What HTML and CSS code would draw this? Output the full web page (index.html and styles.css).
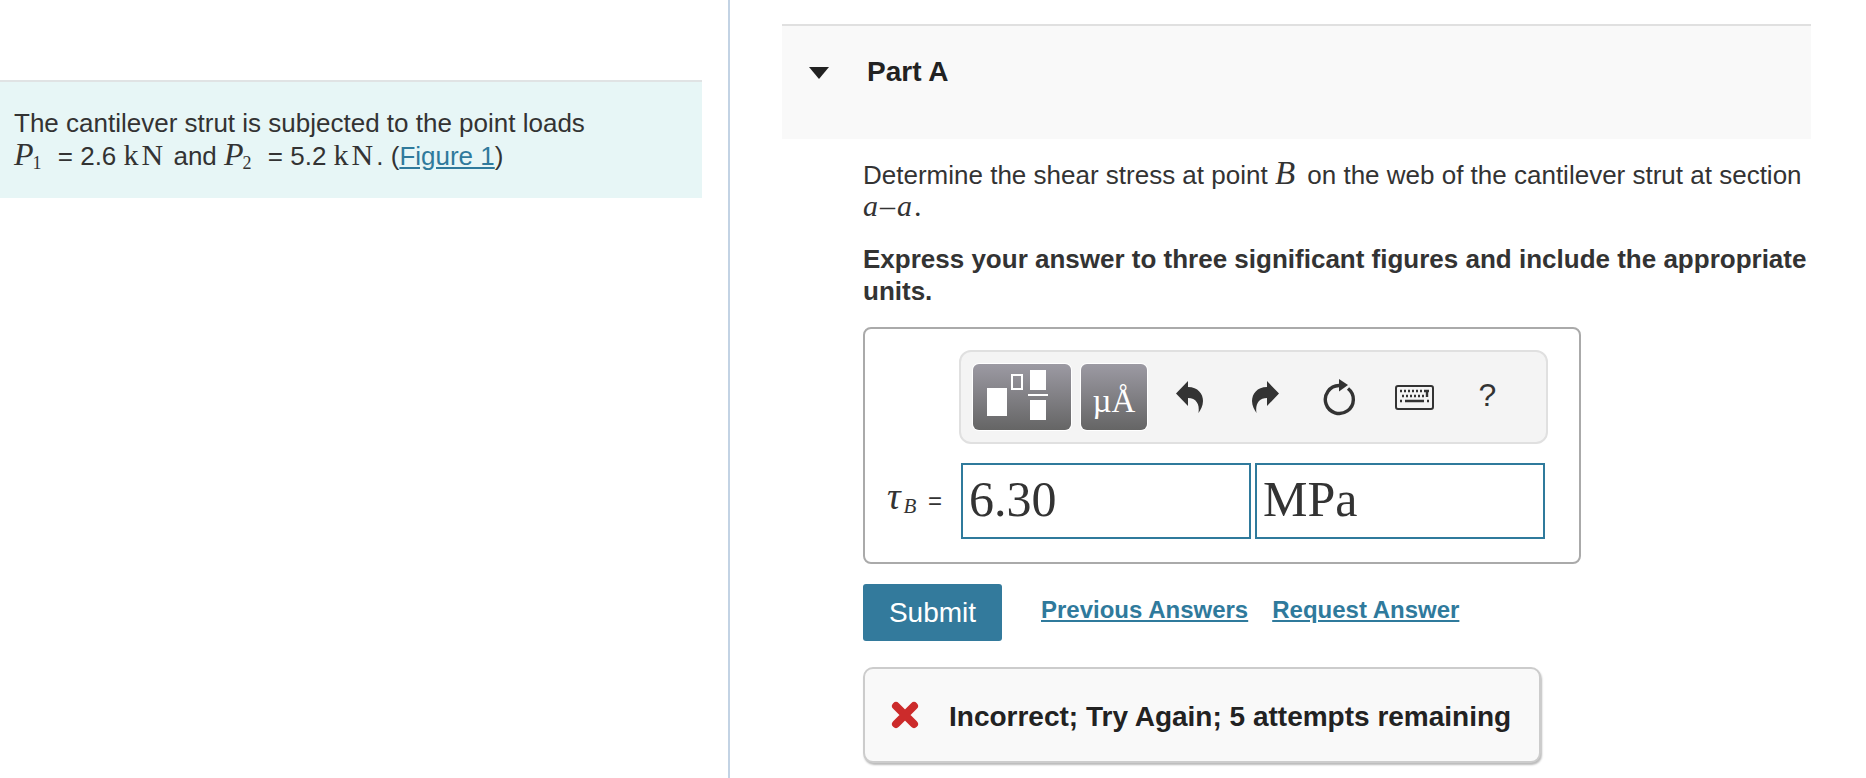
FILE: index.html
```html
<!DOCTYPE html>
<html lang="en">
<head>
    <meta charset="UTF-8">
    <title>Part A</title>
    <link rel="stylesheet" href="styles.css">
</head>
<body>
    <div class="intro-column">
        <div class="intro">
            The cantilever strut is subjected to the point loads<br>
            <span class="math load"><i>P</i><sub>1</sub></span> = 2.6 <span class="math unit">kN</span> and <span class="math load"><i>P</i><sub>2</sub></span> = 5.2 <span class="math unit">kN</span>. (<a href="#">Figure 1</a>)
        </div>
    </div>

    <div class="part-column">
        <div class="part-header">
            <span class="caret"></span>
            <h2>Part A</h2>
        </div>

        <div class="part-body">
            <p>Determine the shear stress at point <span class="math point"><i>B</i></span> on the web of the cantilever strut at section<br><span class="math section"><i>a</i>&ndash;<i>a</i>.</span></p>
            <p class="instructions">Express your answer to three significant figures and include the appropriate units.</p>

            <div class="answer-box">
                <div class="toolbar">
                    <div class="tool-btn templates">
                        <svg width="98" height="66" viewBox="0 0 98 66">
                            <rect x="14" y="24" width="20" height="28" fill="#fff"/>
                            <rect x="39" y="11" width="10" height="14" fill="none" stroke="#fff" stroke-width="2"/>
                            <rect x="57" y="6" width="16" height="20" fill="#fff"/>
                            <rect x="55" y="30" width="20" height="2" fill="#fff"/>
                            <rect x="57" y="36" width="16" height="20" fill="#fff"/>
                        </svg>
                    </div>
                    <div class="tool-btn units">&micro;&Aring;</div>
                    <span class="tool-icon">
                        <svg width="28" height="32" viewBox="0 0 28 32"><path d="M0 12.500 L12 0 V6 C22 6 27 13 27 20 C27 25 24.500 29 22.500 32 C24 23 20 17 12 17 V25 Z" fill="#333"/></svg>
                    </span>
                    <span class="tool-icon">
                        <svg width="28" height="32" viewBox="0 0 28 32"><path d="M28 12.500 L16 0 V6 C6 6 1 13 1 20 C1 25 3.500 29 5.500 32 C4 23 8 17 16 17 V25 Z" fill="#333"/></svg>
                    </span>
                    <span class="tool-icon">
                        <svg width="34" height="37" viewBox="0 0 34 37"><path d="M16 6.500 A14 14 0 1 0 25 9.500" fill="none" stroke="#333" stroke-width="3.400"/><path d="M16 0 L25 6 L16 12.500 Z" fill="#333"/></svg>
                    </span>
                    <span class="tool-icon">
                        <svg width="39" height="25" viewBox="0 0 39 25">
                            <rect x="1" y="1" width="37" height="23" rx="2" fill="none" stroke="#333" stroke-width="2"/>
                            <path d="M5 6h2M9 6h2M13 6h2M17 6h2M21 6h2M25 6h2M29 6h5M7 11h2M11 11h2M15 11h2M19 11h2M23 11h2M27 11h2M32 6v6M5 16h2M10 16h19M32 16h2" stroke="#333" stroke-width="2.400" fill="none"/>
                        </svg>
                    </span>
                    <span class="tool-icon help">?</span>
                </div>

                <div class="answer-row">
                    <span class="answer-label"><span class="math tau"><i>&tau;</i><sub><i>B</i></sub></span> =</span>
                    <div class="answer-input">6.30</div>
                    <div class="answer-input">MPa</div>
                </div>
            </div>

            <div class="actions">
                <button class="submit">Submit</button>
                <a href="#">Previous Answers</a>
                <a href="#">Request Answer</a>
            </div>

            <div class="feedback">
                <svg width="28" height="28" viewBox="0 0 28 28"><path d="M5 5 L23 23 M23 5 L5 23" stroke="#cc2b2b" stroke-width="8" stroke-linecap="round"/></svg>
                <span class="feedback-text">Incorrect; Try Again; 5 attempts remaining</span>
            </div>
        </div>
    </div>
</body>
</html>
```

FILE: styles.css
```css
html, body {
    margin: 0;
    height: 778px;
    overflow: hidden;
}
body {
    display: flex;
    background: #fff;
    color: #333;
    font-family: "Liberation Sans", Arial, sans-serif;
    font-size: 26px;
    line-height: 32px;
}
a {
    color: #2f7a9c;
    text-decoration: underline;
}
.math {
    font-family: "Liberation Serif", serif;
    font-size: 30px;
    line-height: 0;
}
.math sub {
    font-size: 18px;
    line-height: 0;
    vertical-align: -4px;
}
.unit {
    letter-spacing: 3px;
}
.load {
    margin-right: 9px;
    font-size: 32px;
}
.load sub {
    margin-left: -1px;
}
.point {
    margin-right: 5px;
    font-size: 33px;
}
.section {
    letter-spacing: 2px;
}
.tau {
    margin-right: 5px;
    font-size: 38px;
}
.tau sub {
    margin-left: 3px;
    font-size: 21px;
}

.intro-column {
    width: 730px;
    flex-shrink: 0;
    box-sizing: border-box;
    padding: 80px 26px 0 0;
    border-right: 2px solid #c3d3e4;
}
.intro {
    padding: 25px 14px 25px;
    border-top: 2px solid #e0e3e4;
    background: #e7f6f6;
    line-height: 33px;
}

.part-column {
    width: 1029px;
    margin: 24px 0 0 52px;
    flex-shrink: 0;
}
.part-header {
    display: flex;
    align-items: flex-start;
    height: 113px;
    border-top: 2px solid #e0e0e0;
    background: #f9f9f9;
}
.caret {
    margin: 41px 0 0 27px;
    border-left: 10px solid transparent;
    border-right: 10px solid transparent;
    border-top: 12px solid #222;
}
.part-header h2 {
    margin: 30px 0 0 38px;
    font-size: 28px;
    line-height: 32px;
    color: #222;
}
.part-body {
    padding: 20px 0 0 81px;
}
.part-body p {
    margin: 0 0 20px;
}
.instructions {
    font-weight: bold;
}

.answer-box {
    box-sizing: border-box;
    width: 718px;
    height: 237px;
    margin-top: 19px;
    padding: 21px 32px 0 94px;
    border: 2px solid #aaa;
    border-radius: 8px;
}
.toolbar {
    display: flex;
    align-items: center;
    box-sizing: border-box;
    width: 589px;
    height: 94px;
    padding-left: 12px;
    background: #f4f4f4;
    border: 2px solid #e0e0e0;
    border-radius: 12px;
}
.tool-btn {
    height: 66px;
    border-radius: 6px;
    background: linear-gradient(#9c9aa3, #656565);
    box-shadow: 0 0 0 1px #fff;
    color: #fff;
}
.templates {
    width: 98px;
    margin-right: 10px;
}
.units {
    width: 66px;
    margin-right: 5px;
    font-family: "Liberation Serif", serif;
    font-size: 33px;
    line-height: 74px;
    text-align: center;
}
.tool-icon {
    display: flex;
    justify-content: center;
    width: 75px;
}
.help {
    font-size: 32px;
    margin-top: -4px;
    margin-left: -2px;
    color: #333;
}

.answer-row {
    display: flex;
    align-items: center;
    margin-top: 19px;
}
.answer-label {
    box-sizing: border-box;
    width: 80px;
    flex-shrink: 0;
    margin-left: -78px;
    padding-right: 19px;
    text-align: right;
    white-space: nowrap;
    font-size: 24px;
}
.answer-input {
    box-sizing: border-box;
    width: 290px;
    height: 76px;
    flex-shrink: 0;
    margin-right: 4px;
    padding-left: 6px;
    border: 2px solid #2f7a9c;
    font-family: "Liberation Serif", serif;
    font-size: 50px;
    line-height: 69px;
}

.actions {
    display: flex;
    align-items: flex-start;
    margin-top: 20px;
    font-weight: bold;
    font-size: 24px;
}
.actions a {
    margin: 10px 24px 0 0;
}
.submit {
    width: 139px;
    height: 57px;
    margin-right: 39px;
    border: 0;
    border-radius: 3px;
    background: #337a9c;
    color: #fff;
    font-family: "Liberation Sans", Arial, sans-serif;
    font-size: 28px;
}

.feedback {
    display: flex;
    align-items: center;
    gap: 30px;
    box-sizing: border-box;
    width: 678px;
    height: 96px;
    margin-top: 26px;
    padding-left: 26px;
    background: #f9f9f9;
    border: 2px solid #ccc;
    border-radius: 10px;
    box-shadow: 1px 2px 2px #bbb;
    color: #222;
    font-size: 28px;
    font-weight: bold;
}
.feedback-text {
    padding-top: 4px;
}
```
